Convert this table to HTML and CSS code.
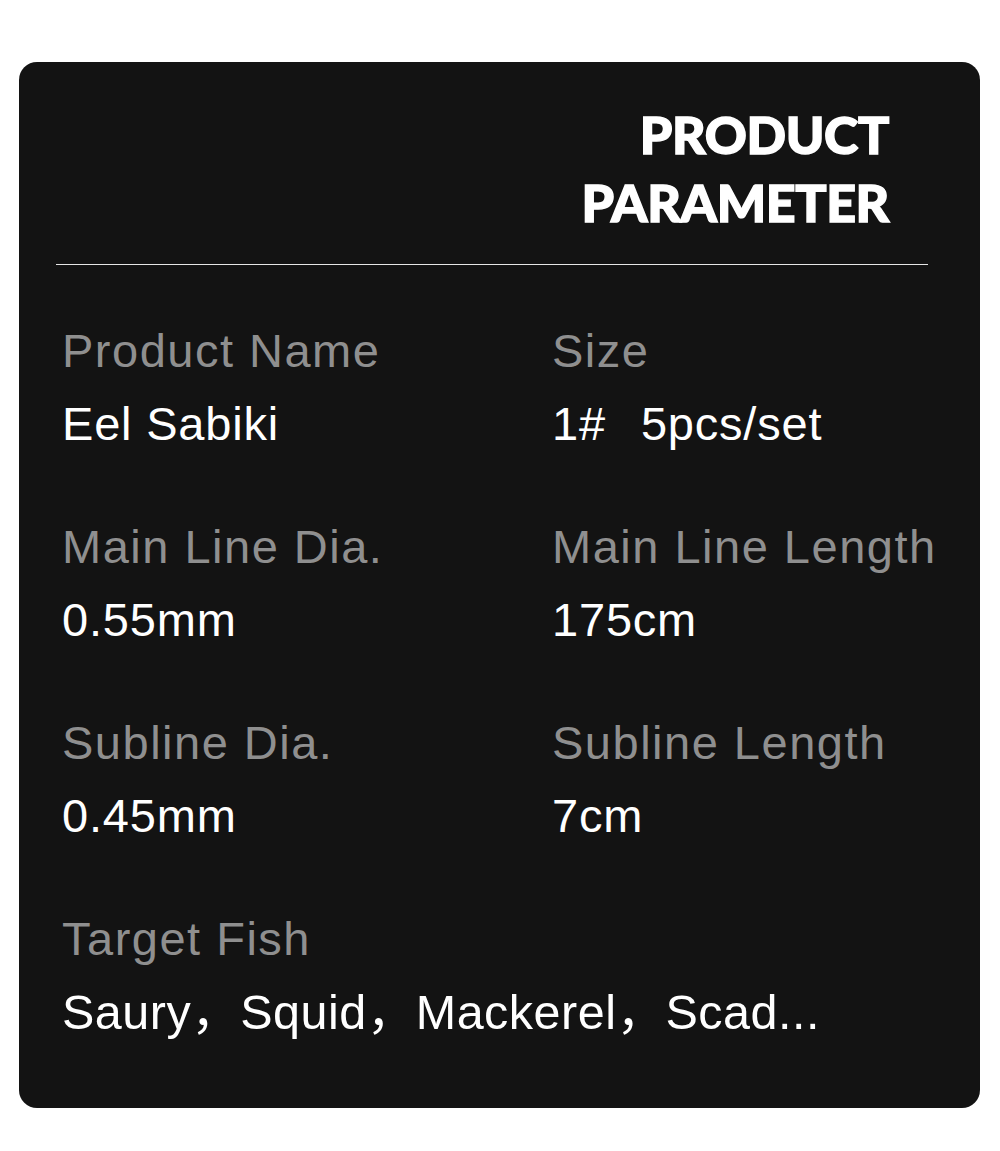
FILE: index.html
```html
<!DOCTYPE html>
<html lang="en">
<head>
<meta charset="utf-8">
<title>Product Parameter</title>
<link rel="stylesheet" href="styles.css">
</head>
<body>
<div class="card">
  <div class="title">
    <div class="title-line">PRODUCT</div>
    <div class="title-line">PARAMETER</div>
  </div>
  <div class="divider"></div>
  <div class="params">
    <div class="item">
      <div class="label">Product Name</div>
      <div class="value">Eel Sabiki</div>
    </div>
    <div class="item">
      <div class="label">Size</div>
      <div class="value"><span class="num">1#</span>5pcs/set</div>
    </div>
    <div class="item">
      <div class="label">Main Line Dia.</div>
      <div class="value">0.55mm</div>
    </div>
    <div class="item">
      <div class="label">Main Line Length</div>
      <div class="value">175cm</div>
    </div>
    <div class="item">
      <div class="label">Subline Dia.</div>
      <div class="value">0.45mm</div>
    </div>
    <div class="item">
      <div class="label">Subline Length</div>
      <div class="value">7cm</div>
    </div>
    <div class="item wide">
      <div class="label">Target Fish</div>
      <div class="value fish">Saury，Squid，Mackerel，Scad...</div>
    </div>
  </div>
</div>
</body>
</html>
```
FILE: styles.css
```css
html, body {
  margin: 0;
  padding: 0;
  background: #ffffff;
}
body {
  width: 1000px;
  height: 1151px;
  padding-top: 62px;
  box-sizing: border-box;
}
.card {
  margin-left: 19px;
  width: 961px;
  background: #131313;
  border-radius: 18px;
  padding-top: 38px;
  padding-bottom: 68px;
  box-sizing: border-box;
}
.title {
  text-align: right;
  padding-right: 91px;
  font-family: Lato, "Liberation Sans", sans-serif;
  font-weight: 900;
  font-size: 52px;
  line-height: 68px;
  letter-spacing: -0.4px;
  color: #ffffff;
  -webkit-text-stroke: 1.4px #ffffff;
}
.divider {
  height: 1px;
  background: #e6e6e6;
  margin: 28px 52px 0 37px;
}
.params {
  display: grid;
  grid-template-columns: 490px 1fr;
  row-gap: 67px;
  padding-top: 58px;
  padding-left: 43px;
  font-family: "Liberation Sans", Arial, "Noto Sans CJK SC", sans-serif;
}
.item.wide {
  grid-column: 1 / span 2;
}
.label {
  font-size: 47px;
  line-height: 56px;
  letter-spacing: 1.5px;
  color: #8f8f8f;
  margin-bottom: 17px;
  white-space: nowrap;
}
.value {
  font-size: 47px;
  line-height: 56px;
  letter-spacing: 0.8px;
  color: #ffffff;
  white-space: nowrap;
}
.num {
  margin-right: 35px;
}
.value.fish {
  font-size: 48.5px;
  letter-spacing: 0.5px;
}
```
